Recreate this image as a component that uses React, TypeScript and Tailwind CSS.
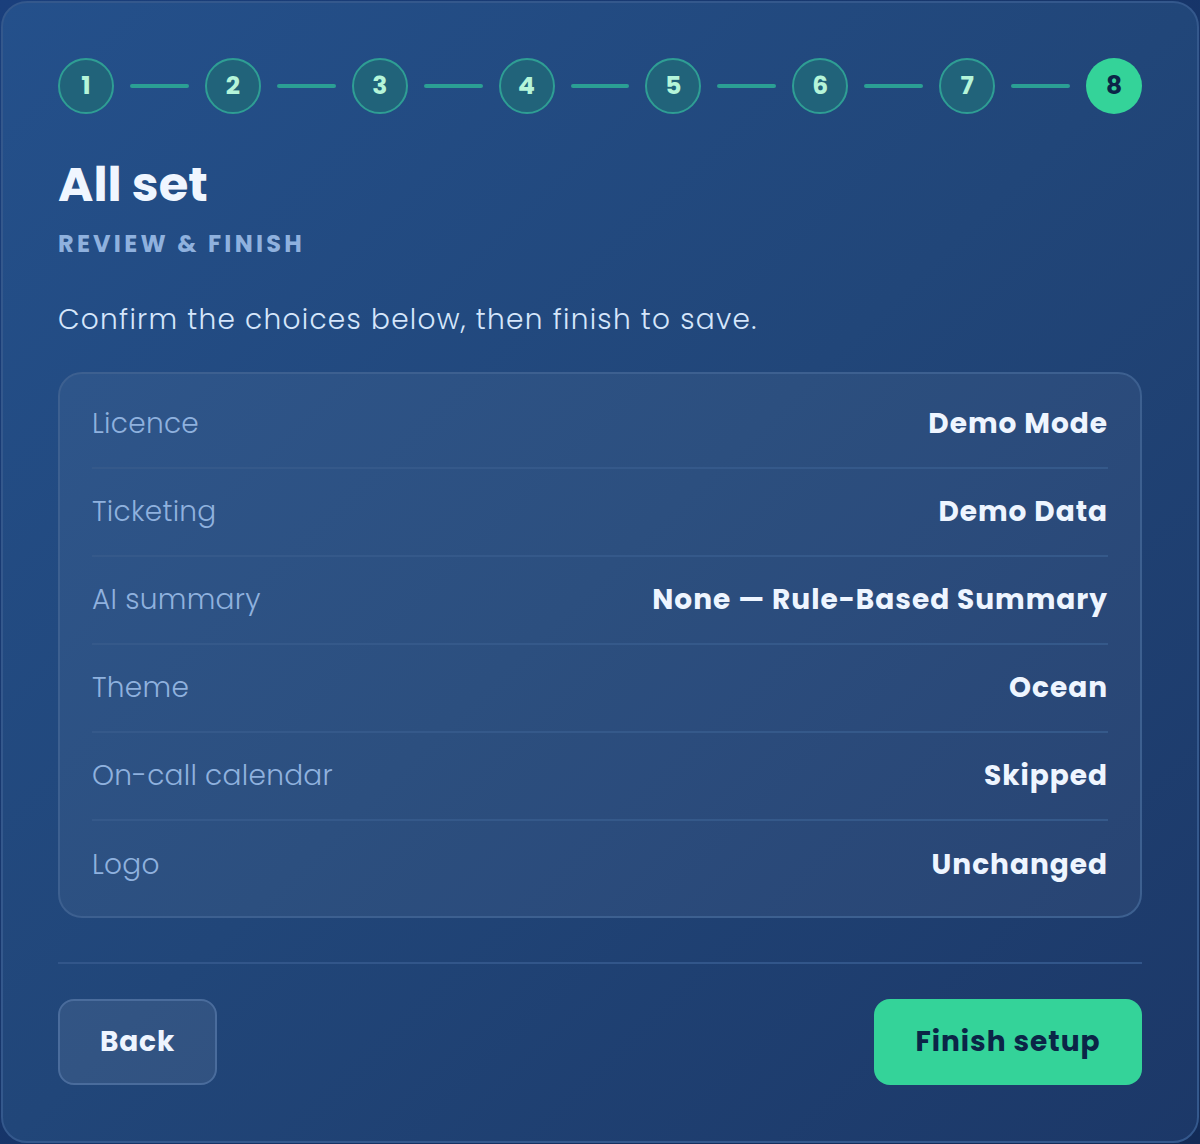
import React from "react";

const steps = [1, 2, 3, 4, 5, 6, 7, 8];

const rows = [
  { label: "Licence", value: "Demo Mode" },
  { label: "Ticketing", value: "Demo Data" },
  { label: "AI summary", value: "None — Rule-Based Summary" },
  { label: "Theme", value: "Ocean" },
  { label: "On-call calendar", value: "Skipped" },
  { label: "Logo", value: "Unchanged" },
];

export default function App() {
  return (
    <div
      className="min-h-[1144px] w-[1200px] bg-gradient-to-br from-[#1a3f7c] to-[#132b57] p-px"
      style={{ fontFamily: "Poppins, Inter, 'Noto Sans', sans-serif" }}
    >
      <div className="min-h-[1142px] rounded-[26px] border-2 border-[#34588c] bg-gradient-to-br from-[#24508b] via-[#214679] to-[#1c3868] px-[55px] pt-[55px] pb-[56px]">
        {/* stepper */}
        <div className="flex items-center">
          {steps.map((n, i) => (
            <React.Fragment key={n}>
              {n === 8 ? (
                <div className="flex h-[56px] w-[56px] shrink-0 items-center justify-center rounded-full bg-[#34d399] text-[25px] font-bold text-[#0b2547]">
                  {n}
                </div>
              ) : (
                <div className="flex h-[56px] w-[56px] shrink-0 items-center justify-center rounded-full border-2 border-[#2f9e94] bg-[#21637a] text-[25px] font-bold text-[#b5f5d9]">
                  {n}
                </div>
              )}
              {i < steps.length - 1 && (
                <div className="mx-4 h-[4px] flex-1 rounded-full bg-[#2b9f94]" />
              )}
            </React.Fragment>
          ))}
        </div>

        {/* heading */}
        <h1 className="mt-[43px] text-[48px] font-bold leading-[56px] text-[#f0f6ff]">All set</h1>
        <div className="mt-[16px] text-[24px] font-bold uppercase leading-[30px] tracking-[0.135em] text-[#8fb1de]">
          Review &amp; Finish
        </div>
        <p className="mt-[41px] text-[28px] font-light leading-[40px] tracking-[0.045em] text-[#d5e6fb]">
          Confirm the choices below, then finish to save.
        </p>

        {/* summary */}
        <div className="mt-[32px] rounded-[24px] border-2 border-[#3d6090] bg-[#ffffff0d] pl-[32px] pr-[32px] py-[7px]">
          {rows.map((r, i) => (
            <div
              key={r.label}
              className={`flex h-[88px] items-center justify-between ${i < rows.length - 1 ? "border-b-2 border-[#35598a]" : ""}`}
            >
              <span className="text-[28px] font-light tracking-[0.01em] text-[#8fb1de]">{r.label}</span>
              <span className="text-[28px] font-bold tracking-[0.035em] text-[#eef5ff]">{r.value}</span>
            </div>
          ))}
        </div>

        <div className="mt-[44px] h-[2px] bg-[#32568a]" />

        {/* footer */}
        <div className="mt-[35px] flex items-center justify-between">
          <button className="h-[86px] w-[159px] rounded-[16px] border-2 border-[#4a6c9c] bg-[#ffffff14] text-[28px] font-bold tracking-[0.03em] text-[#eef5ff]">
            Back
          </button>
          <button className="h-[86px] w-[268px] rounded-[16px] bg-[#34d399] text-[28px] font-bold tracking-[0.035em] text-[#0b2547]">
            Finish setup
          </button>
        </div>
      </div>
    </div>
  );
}
